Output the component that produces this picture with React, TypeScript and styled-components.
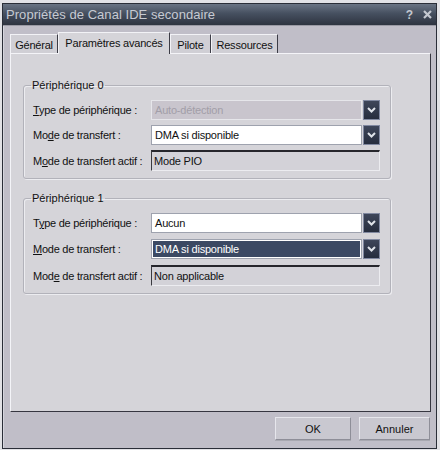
import styled, { createGlobalStyle, css } from "styled-components";

const GlobalStyle = createGlobalStyle`
  html, body {
    margin: 0;
    padding: 0;
    background: #e2e2e6;
  }
  body {
    font-family: "Liberation Sans", Arial, sans-serif;
    font-size: 11px;
    color: #111;
  }
`;

const Screen = styled.div`
  width: 440px;
  height: 450px;
  padding: 3px 0 0 2px;
  box-sizing: border-box;
  overflow: hidden;
`;

const Window = styled.div`
  width: 435px;
  height: 446px;
  box-sizing: border-box;
  display: flex;
  flex-direction: column;
  background: #c0bec8;
  border: 1px solid #2a2e38;
  box-shadow: inset 1px 0 0 #d6d6de;
`;

const TitleBar = styled.div`
  height: 21px;
  flex: none;
  display: flex;
  align-items: center;
  justify-content: space-between;
  padding: 0 4px 0 3px;
  background: linear-gradient(#6a7484, #465060 45%, #2e3440);
  border-bottom: 1px solid #9a9aa4;
`;

const TitleText = styled.span`
  font-size: 13px;
  color: #c6cad2;
  letter-spacing: 0.05px;
`;

const TitleButtons = styled.div`
  display: flex;
  align-items: center;
  gap: 10px;
  color: #c4c8d0;
`;

const HelpGlyph = styled.span`
  font-weight: bold;
  font-size: 12px;
`;

const Body = styled.div`
  flex: 1;
  display: flex;
  flex-direction: column;
  padding: 6px 4px 0 7px;
`;

const TabRow = styled.div`
  display: flex;
  align-items: flex-end;
  height: 21px;
`;

const Tab = styled.div<{ $w: number; $active?: boolean }>`
  width: ${(p) => p.$w}px;
  height: 19px;
  box-sizing: border-box;
  display: flex;
  align-items: center;
  justify-content: center;
  background: #d0cfd5;
  border-top: 1px solid #f2f2f6;
  border-left: 1px solid #f2f2f6;
  border-right: 1px solid #3c3c46;
  letter-spacing: -0.2px;
  padding-top: 1px;
  ${(p) =>
    p.$active &&
    css`
      height: 22px;
      margin-bottom: -1px;
      background: #d5d4d9;
      position: relative;
      padding-bottom: 3px;
    `}
`;

const Panel = styled.div`
  width: 421px;
  height: 359px;
  box-sizing: border-box;
  background: #d5d4d9;
  border-top: 1px solid #f4f4f8;
  border-left: 1px solid #f4f4f8;
  border-right: 1px solid #363640;
  border-bottom: 1px solid #363640;
  padding: 25px 0 0 12px;
`;

const Group = styled.fieldset<{ $bottom: number }>`
  width: 368px;
  box-sizing: border-box;
  margin: 0 0 ${(p) => p.$bottom}px 0;
  padding: 8px 0 8px 7px;
  border: 1px solid #b2b2ba;
  border-radius: 3px;
  box-shadow: 1px 1px 0 #ececf0, inset 1px 1px 0 #ececf0;
`;

const Legend = styled.legend`
  padding: 0 1px;
  color: #111;
  line-height: 13px;
`;

const Row = styled.div<{ $gap: number }>`
  display: grid;
  grid-template-columns: 120px 229px;
  align-items: center;
  height: 20px;
  margin-bottom: ${(p) => p.$gap}px;
  &:last-child {
    margin-bottom: 0;
  }
`;

const Label = styled.span`
  padding-left: 2px;
  letter-spacing: -0.25px;
  white-space: nowrap;
`;

const Combo = styled.div`
  display: flex;
  gap: 1px;
  height: 20px;
`;

type FieldKind = "normal" | "disabled" | "selected";

const ComboField = styled.div<{ $kind: FieldKind }>`
  width: 211px;
  box-sizing: border-box;
  display: flex;
  align-items: center;
  padding-left: 3px;
  border: 1px solid #9ea2ae;
  background: #ffffff;
  letter-spacing: -0.2px;
  ${(p) =>
    p.$kind === "disabled" &&
    css`
      background: #c9c5cd;
      color: #a29ea8;
      border-color: #e6e6ea;
    `}
  ${(p) =>
    p.$kind === "selected" &&
    css`
      background: #3b4963;
      color: #ffffff;
      box-shadow: inset 0 0 0 1px #ffffff;
    `}
`;

const DropButton = styled.div`
  width: 17px;
  box-sizing: border-box;
  display: flex;
  align-items: center;
  justify-content: center;
  background: linear-gradient(#3e465a, #262d3e);
  border: 1px solid #8088a0;
`;

const StaticField = styled.div`
  width: 229px;
  height: 21px;
  box-sizing: border-box;
  display: flex;
  align-items: center;
  padding-left: 2px;
  background: #d3d2d8;
  border-top: 2px solid #26262c;
  border-left: 1px solid #3a3a40;
  border-right: 1px solid #ececf0;
  border-bottom: 1px solid #ececf0;
  letter-spacing: -0.2px;
`;

const ButtonRow = styled.div`
  display: flex;
  justify-content: flex-end;
  gap: 8px;
  padding: 5px 2px 0 0;
`;

const PushButton = styled.button<{ $w: number }>`
  width: ${(p) => p.$w}px;
  height: 23px;
  font-family: "Liberation Sans", Arial, sans-serif;
  font-size: 11px;
  color: #111;
  background: #c9c8d0;
  border: 1px solid;
  border-color: #e6e6ec #8e8e98 #8e8e98 #e6e6ec;
  box-shadow: 0 1px 0 #a8a8b0;
  padding: 0;
`;

const Chevron = () => (
  <svg width="9" height="6" viewBox="0 0 9 6">
    <path d="M1 1 L4.5 4.5 L8 1" fill="none" stroke="#dfe3ea" strokeWidth="2" />
  </svg>
);

const CloseIcon = () => (
  <svg width="9" height="9" viewBox="0 0 9 9">
    <path d="M1 1 L8 8 M8 1 L1 8" stroke="#c4c8d0" strokeWidth="2.2" />
  </svg>
);

const ComboBox = ({ value, kind = "normal" }: { value: string; kind?: FieldKind }) => (
  <Combo>
    <ComboField $kind={kind}>{value}</ComboField>
    <DropButton>
      <Chevron />
    </DropButton>
  </Combo>
);

export default function App() {
  return (
    <>
      <GlobalStyle />
      <Screen>
        <Window>
          <TitleBar>
            <TitleText>Propriétés de Canal IDE secondaire</TitleText>
            <TitleButtons>
              <HelpGlyph>?</HelpGlyph>
              <CloseIcon />
            </TitleButtons>
          </TitleBar>
          <Body>
            <TabRow>
              <Tab $w={48}>Général</Tab>
              <Tab $w={112} $active>
                Paramètres avancés
              </Tab>
              <Tab $w={41}>Pilote</Tab>
              <Tab $w={67}>Ressources</Tab>
            </TabRow>
            <Panel>
              <Group $bottom={13}>
                <Legend>Périphérique 0</Legend>
                <Row $gap={5}>
                  <Label>
                    <u>T</u>ype de périphérique :
                  </Label>
                  <ComboBox value="Auto-détection" kind="disabled" />
                </Row>
                <Row $gap={5}>
                  <Label>
                    Mo<u>d</u>e de transfert :
                  </Label>
                  <ComboBox value="DMA si disponible" />
                </Row>
                <Row $gap={5}>
                  <Label>
                    M<u>o</u>de de transfert actif :
                  </Label>
                  <StaticField>Mode PIO</StaticField>
                </Row>
              </Group>
              <Group $bottom={0}>
                <Legend>Périphérique 1</Legend>
                <Row $gap={6}>
                  <Label>
                    T<u>y</u>pe de périphérique :
                  </Label>
                  <ComboBox value="Aucun" />
                </Row>
                <Row $gap={6}>
                  <Label>
                    <u>M</u>ode de transfert :
                  </Label>
                  <ComboBox value="DMA si disponible" kind="selected" />
                </Row>
                <Row $gap={6}>
                  <Label>
                    Mod<u>e</u> de transfert actif :
                  </Label>
                  <StaticField>Non applicable</StaticField>
                </Row>
              </Group>
            </Panel>
            <ButtonRow>
              <PushButton $w={76}>OK</PushButton>
              <PushButton $w={71}>Annuler</PushButton>
            </ButtonRow>
          </Body>
        </Window>
      </Screen>
    </>
  );
}
